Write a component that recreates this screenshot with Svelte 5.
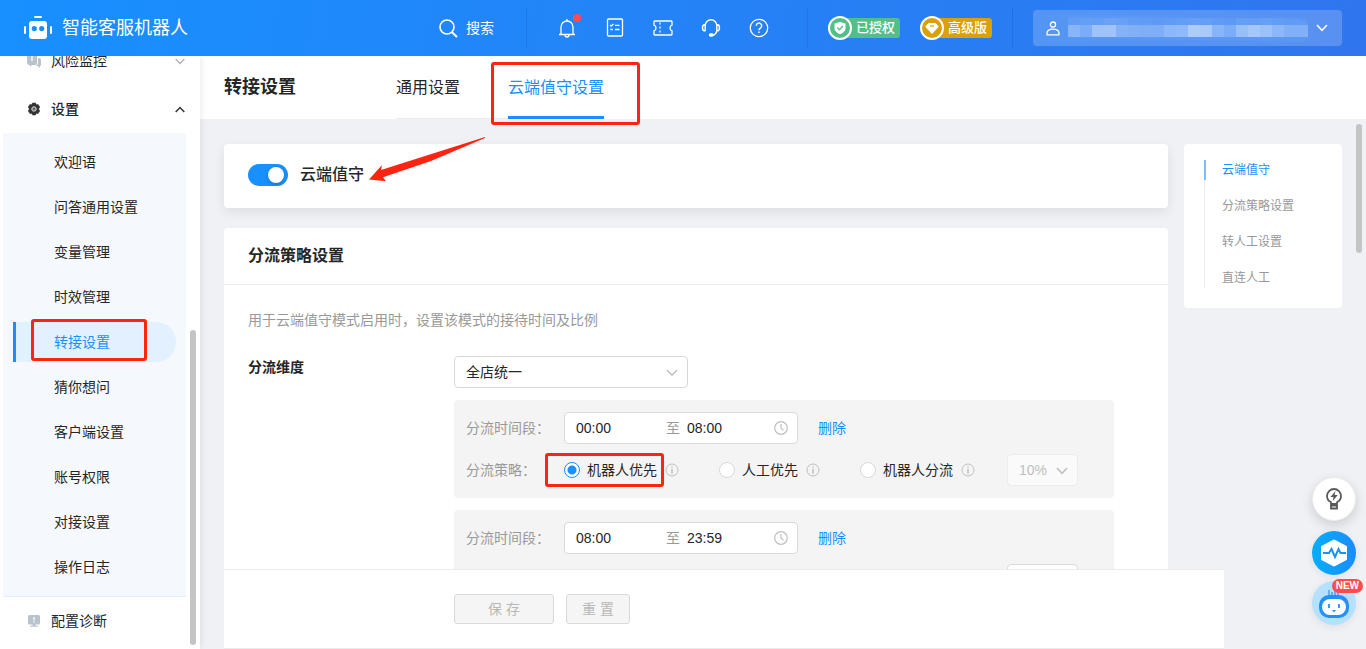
<script>
  const submenu = [
    '欢迎语',
    '问答通用设置',
    '变量管理',
    '时效管理',
    '转接设置',
    '猜你想问',
    '客户端设置',
    '账号权限',
    '对接设置',
    '操作日志'
  ];
  const activeMenu = '转接设置';

  const anchors = ['云端值守', '分流策略设置', '转人工设置', '直连人工'];

  const strategies = ['机器人优先', '人工优先', '机器人分流'];

  let enabled = true;
  let periods = [
    { start: '00:00', end: '08:00', strategy: '机器人优先', disabled: true },
    { start: '08:00', end: '23:59', strategy: '机器人分流', disabled: false }
  ];

  // opacity of each block of the masked account name
  const maskTop = [4, 6, 5, 10, 8, 4, 3, 2, 3, 5, 7, 6, 3, 2, 6, 5, 7, 4, 3, 3];
  const maskMid = [28, 20, 42, 42, 26, 24, 22, 22, 30, 32, 50, 48, 28, 20, 38, 46, 40, 30, 24, 24];

  function removePeriod(index) {
    periods = periods.filter((_, i) => i !== index);
  }
</script>

<div class="app">
  <header class="topbar">
    <a class="brand" href="#home">
      <svg width="28" height="24" viewBox="0 0 28 24" fill="#fff">
        <rect x="10" y="0" width="8" height="2" rx="1" />
        <rect x="0" y="10" width="2" height="8" rx="1" />
        <rect x="26" y="10" width="2" height="8" rx="1" />
        <path fill-rule="evenodd" d="M8 5h12a3 3 0 0 1 3 3v12a3 3 0 0 1-3 3H8a3 3 0 0 1-3-3V8a3 3 0 0 1 3-3zm2.300 5a2.600 2.600 0 1 0 0 5.200 2.600 2.600 0 0 0 0-5.200zm7.400 0a2.600 2.600 0 1 0 0 5.200 2.600 2.600 0 0 0 0-5.200z" />
      </svg>
      <span>智能客服机器人</span>
    </a>

    <button class="search">
      <svg width="19" height="19" viewBox="0 0 19 19" fill="none" stroke="#fff" stroke-width="1.600">
        <circle cx="8" cy="8" r="7" />
        <path d="M13 13.200l5 4.800" stroke-width="2" />
      </svg>
      <span>搜索</span>
    </button>

    <div class="tools">
      <button aria-label="通知">
        <svg width="20" height="20" viewBox="0 0 20 20" fill="none" stroke="#fff" stroke-width="1.300">
          <path d="M10 1v1.500M2 16.500h16M4 16.500V9a6 6 0 0 1 12 0v7.500M8 17a2 2 0 0 0 4 0" />
        </svg>
        <i class="dot"></i>
      </button>
      <button aria-label="任务">
        <svg width="20" height="20" viewBox="0 0 20 20" fill="none" stroke="#fff" stroke-width="1.300">
          <rect x="2.500" y="1" width="15" height="17" rx="1" />
          <path d="M5 7l1.200 1.200L8.400 6M10 7.300h4.500M10 11.500h4.500M5.400 11.500h2.400" />
        </svg>
      </button>
      <button aria-label="卡券">
        <svg width="20" height="20" viewBox="0 0 20 20" fill="none" stroke="#fff" stroke-width="1.300">
          <path d="M1.800 3h16.400q.8 0 .8.800v3.400q-2 .6-2 2.800t2 2.800v3.400q0 .8-.8.800H1.800q-.8 0-.8-.8v-3.400q2-.6 2-2.800T1 7.200V3.800q0-.8.8-.8z" />
          <path d="M7 4.500v11" stroke-dasharray="2 2" />
        </svg>
      </button>
      <button aria-label="客服">
        <svg width="20" height="20" viewBox="0 0 20 20" fill="none" stroke="#fff" stroke-width="1.400">
          <path d="M4.200 13V7.500a5.800 5.800 0 0 1 11.600 0V13c-.6 2.500-2.200 4-4.300 4.300M4.200 6.500C2.200 6.500 1.500 8 1.500 9.800s.7 3.200 2.700 3.200M15.800 6.500c2 0 2.700 1.500 2.700 3.300s-.7 3.200-2.700 3.200" />
          <rect x="8.500" y="16" width="3.500" height="2" rx="1" fill="#fff" />
        </svg>
      </button>
      <button aria-label="帮助">
        <svg width="20" height="20" viewBox="0 0 20 20" fill="none" stroke="#fff" stroke-width="1.300">
          <circle cx="10" cy="10" r="8.700" />
          <path d="M7.300 7.800a2.700 2.700 0 1 1 4.200 2.200c-1 .7-1.500 1-1.500 2.200M10 13.500v1.600" stroke-width="1.500" />
        </svg>
      </button>
    </div>

    <div class="badges">
      <span class="badge green">
        <svg width="24" height="24" viewBox="0 0 24 24">
          <circle cx="12" cy="12" r="11" fill="#53bf88" stroke="#fff" stroke-width="2" />
          <path d="M12 6l5.500 1.500v4.700c0 2.800-2.500 4.800-5.500 6-3-1.200-5.500-3.200-5.500-6V7.500z" fill="#fff" />
          <path d="M9.300 11.500l2.200 2.200 3.400-3.700" fill="none" stroke="#53bf88" stroke-width="1.300" />
        </svg>
        已授权
      </span>
      <span class="badge gold">
        <svg width="24" height="24" viewBox="0 0 24 24">
          <circle cx="12" cy="12" r="11" fill="#dba004" stroke="#fff" stroke-width="2" />
          <path d="M8.500 7.500h7l2.800 3.200L12 17.500l-6.300-6.800z" fill="#fff" stroke="#fff" stroke-linejoin="round" />
          <path d="M10 10h4" stroke="#dba004" stroke-width="1.200" />
        </svg>
        高级版
      </span>
    </div>

    <button class="account" aria-label="账号">
      <svg width="14" height="15" viewBox="0 0 14 15" fill="none" stroke="#fff" stroke-width="1.300">
        <circle cx="7" cy="3.600" r="2.600" />
        <path d="M1 13.800v-1.300c0-2.800 2.500-4.300 6-4.300s6 1.500 6 4.300v1.300z" stroke-linejoin="round" />
      </svg>
      <svg class="mask" width="240" height="28" viewBox="0 0 240 28">
        <path d="M4 2C60-1 80 4 150 4s70 0 84 2q6 1 6 6v12q-2 4-10 4C140 26 70 26 4 24q-4 0-4-6V6q0-4 4-4z" fill="#5b98f5" />
        {#each maskTop as value, i}
          <rect x={i * 12} y="4" width="12" height="7" fill="#fff" fill-opacity={value / 100} />
        {/each}
        {#each maskMid as value, i}
          <rect x={i * 12} y="11" width="12" height="12" fill="#fff" fill-opacity={value / 100} />
        {/each}
      </svg>
      <svg width="12" height="8" viewBox="0 0 12 8" fill="none" stroke="#fff" stroke-width="1.500">
        <path d="M1 1l5 5.300L11 1" />
      </svg>
    </button>
  </header>

  <div class="body">
    <aside class="sidebar">
      <nav>
        <a class="group" href="#risk">
          <svg width="14" height="14" viewBox="0 0 14 14" fill="#b9c2cd">
            <path d="M3 0h5a2 2 0 0 1 2 2v7a2 2 0 0 1-2 2H5l-2 2v-2a2.500 2.500 0 0 1-3-2V2a2 2 0 0 1 3-2z" />
            <path d="M11 4h1a2 2 0 0 1 2 2v4a2 2 0 0 1-1 2v2l-2-2H7.500a3.500 3.500 0 0 0 3.500-3z" />
            <path d="M5 2v5" stroke="#fff" stroke-width="1.300" />
          </svg>
          <span>风险监控</span>
          <svg class="arrow" width="10" height="7" viewBox="0 0 10 7" fill="none" stroke="#b0b0b0" stroke-width="1.300">
            <path d="M.7 1L5 5.500 9.300 1" />
          </svg>
        </a>
        <a class="group open" href="#settings">
          <svg width="14" height="14" viewBox="0 0 14 14">
            <path d="M5.500 1h3l.7 1.700 1.900-.2L12.700 5l-1.100 2 1.100 2-1.600 2.500-1.900-.2L8.500 13h-3l-.7-1.700-1.900.2L1.300 9l1.100-2-1.100-2 1.600-2.500 1.900.2z" fill="#333" stroke="#333" stroke-width=".6" stroke-linejoin="round" />
            <circle cx="7" cy="7" r="2.200" fill="#666" stroke="#ddd" />
          </svg>
          <span>设置</span>
          <svg class="arrow" width="10" height="7" viewBox="0 0 10 7" fill="none" stroke="#333" stroke-width="1.500">
            <path d="M.7 6L5 1.500 9.300 6" />
          </svg>
        </a>
        <ul class="submenu">
          {#each submenu as item}
            <li>
              <a href="#menu" class:active={item === activeMenu}>
                {item}
                {#if item === activeMenu}<i class="mark menu-mark"></i>{/if}
              </a>
            </li>
          {/each}
        </ul>
        <a class="group" href="#diagnose">
          <svg width="14" height="14" viewBox="0 0 14 14" fill="#b9c2cd">
            <rect x="1" y="1" width="12" height="9.500" rx="1.500" />
            <path d="M5.500 10h3v2h-3zM3 11.700h8v1H3z" />
            <path d="M7 3v3.500M7 7.500v1.200" stroke="#fff" stroke-width="1.300" />
          </svg>
          <span>配置诊断</span>
        </a>
      </nav>
      <i class="thumb side-thumb"></i>
    </aside>

    <main>
      <div class="page-head">
        <h1>转接设置</h1>
        <div class="tabs">
          <a href="#common">通用设置</a>
          <a href="#cloud" class="active">云端值守设置<i class="mark tab-mark"></i></a>
        </div>
      </div>

      <div class="content">
        <div class="cards">
          <section class="card switch-card">
            <label>
              <input class="switch" type="checkbox" role="switch" bind:checked={enabled} />
              <span>云端值守</span>
              <svg class="pointer" width="116" height="46" viewBox="0 0 116 46">
                <path d="M116 1L12 34l1-5L0 43.500l17 1.700-3-4L62 25 116 2z" fill="#ff2412" />
              </svg>
            </label>
          </section>

          <section class="card">
            <h2>分流策略设置</h2>
            <div class="card-body">
              <p>用于云端值守模式启用时，设置该模式的接待时间及比例</p>
              <div class="form-row">
                <label class="form-label" for="dimension">分流维度</label>
                <div class="form-control">
                  <div class="select wide">
                    <select id="dimension">
                      <option>全店统一</option>
                    </select>
                    <svg width="12" height="8" viewBox="0 0 12 8" fill="none" stroke="#bfbfbf" stroke-width="1.300">
                      <path d="M1 1l5 5.300L11 1" />
                    </svg>
                  </div>

                  {#each periods as period, index}
                    <div class="panel">
                      <div class="panel-row">
                        <label class="panel-label" for="start-{index}">分流时间段：</label>
                        <div class="range">
                          <input id="start-{index}" type="text" aria-label="开始时间" bind:value={period.start} />
                          <span>至</span>
                          <input type="text" aria-label="结束时间" bind:value={period.end} />
                          <svg width="14" height="14" viewBox="0 0 14 14" fill="none" stroke="#bfbfbf" stroke-width="1.200">
                            <circle cx="7" cy="7" r="6.300" />
                            <path d="M7 3v4.300l2.500 2" />
                          </svg>
                        </div>
                        <button class="remove" on:click={() => removePeriod(index)}>删除</button>
                      </div>
                      <div class="panel-row">
                        <span class="panel-label">分流策略：</span>
                        <div class="radios">
                          {#each strategies as strategy, i}
                            <div class="radio">
                              <label>
                                <input type="radio" name="strategy-{index}" value={strategy} bind:group={period.strategy} />
                                {strategy}
                                {#if index === 0 && i === 0}<i class="mark radio-mark"></i>{/if}
                              </label>
                              <svg width="14" height="14" viewBox="0 0 14 14" fill="none" stroke="#bfbfbf">
                                <circle cx="7" cy="7" r="6" />
                                <path d="M7 3.200v1.400M7 5.800v5" stroke-width="1.400" />
                              </svg>
                            </div>
                          {/each}
                        </div>
                        <div class="select small" class:disabled={period.disabled}>
                          <select aria-label="分流比例" disabled={period.disabled}>
                            <option>10%</option>
                          </select>
                          <svg width="12" height="8" viewBox="0 0 12 8" fill="none" stroke="#bfbfbf" stroke-width="1.600">
                            <path d="M1 1l5 5.300L11 1" />
                          </svg>
                        </div>
                      </div>
                    </div>
                  {/each}
                </div>
              </div>
            </div>
          </section>
        </div>

        <nav class="anchor">
          <ul>
            {#each anchors as item, i}
              <li class:active={i === 0}><a href="#anchor">{item}</a></li>
            {/each}
          </ul>
        </nav>
        <i class="thumb main-thumb"></i>
      </div>

      <footer>
        <button class="save" disabled>保 存</button>
        <button class="reset" disabled>重 置</button>
      </footer>
    </main>
  </div>

  <div class="floats">
    <button class="tip" aria-label="提示">
      <svg width="16" height="22" viewBox="0 0 16 22" fill="none" stroke="#595959" stroke-width="1.800">
        <path d="M5 16v-1.700C2.500 13 1 10.800 1 8a7 7 0 0 1 14 0c0 2.800-1.500 5-4 6.300V16zM5 16v4.500h6V16M5 17.500h6" />
        <path d="M9.500 3L4.500 9h3L6.800 13l5-6H8.600z" fill="#595959" stroke="none" />
      </svg>
    </button>
    <button class="pulse" aria-label="诊断">
      <svg width="28" height="28" viewBox="0 0 28 28">
        <path d="M14 2l11.500 6v12L14 26 2.500 20V8z" fill="#fff" stroke="#fff" stroke-width="3" stroke-linejoin="round" />
        <path d="M3 14h6l2.500-4 3.500 8 3.500-8 2 4H26" fill="none" stroke="#1b93f5" stroke-width="2" />
      </svg>
    </button>
    <button class="bot" aria-label="机器人">
      <svg width="32" height="32" viewBox="0 0 32 32">
        <path d="M11 3v5M14 5v3M17 1v7M20 4v4" stroke="#2b8ff0" stroke-width="1.200" />
        <rect x="1" y="8" width="30" height="23" rx="10" fill="#2490fb" />
        <rect x="4" y="12" width="24" height="16" rx="8" fill="#fff" />
        <path d="M11 17v4M21 17v4" stroke="#2490fb" stroke-width="1.800" />
        <path d="M14 23h4l-2 2.500z" fill="#2490fb" />
      </svg>
      <span class="new">NEW</span>
    </button>
  </div>
</div>

<style>
  :global(body) {
    margin: 0;
    font-family: 'Liberation Sans', 'Noto Sans CJK SC', sans-serif;
    font-size: 14px;
    line-height: 22px;
    color: #262626;
  }

  .app,
  .app * {
    box-sizing: border-box;
  }

  .app {
    position: relative;
    display: flex;
    flex-direction: column;
    height: 100vh;
    overflow: hidden;
    background: #f0f1f5;
  }

  a {
    color: inherit;
    text-decoration: none;
  }

  button,
  input,
  select {
    font: inherit;
    color: inherit;
    margin: 0;
  }

  button {
    padding: 0;
    border: 0;
    background: none;
    cursor: pointer;
  }

  ul,
  h1,
  h2,
  p {
    list-style: none;
    margin: 0;
    padding: 0;
  }

  svg {
    display: block;
    flex: none;
  }

  .topbar {
    display: flex;
    align-items: center;
    flex: none;
    height: 56px;
    padding: 0 24px;
    color: #fff;
    background: linear-gradient(100deg, #1890ff, #3075ee);
    z-index: 5;
  }

  .brand {
    display: flex;
    align-items: center;
    gap: 10px;
    margin-right: auto;
    font-size: 18px;
  }

  .search {
    display: flex;
    align-items: center;
    gap: 8px;
    margin-right: 32px;
  }

  .tools,
  .badges {
    display: flex;
    align-items: center;
    height: 40px;
    border-left: 1px solid rgba(0, 40, 120, 0.12);
  }

  .tools {
    gap: 28px;
    padding: 0 38px 0 30px;
  }

  .tools button {
    position: relative;
  }

  .dot {
    position: absolute;
    top: -4px;
    right: -4px;
    width: 8px;
    height: 8px;
    border-radius: 50%;
    background: #ff4d4f;
  }

  .badges {
    gap: 20px;
    padding: 0 20px;
    border-right: 1px solid rgba(0, 40, 120, 0.12);
  }

  .badge {
    display: flex;
    align-items: center;
    gap: 4px;
    width: 72px;
    height: 20px;
    border-radius: 12px 4px 4px 12px;
    font-size: 13px;
    font-weight: 500;
    white-space: nowrap;
  }

  .green {
    background: #53bf88;
  }

  .gold {
    background: #dba004;
  }

  .account {
    display: flex;
    align-items: center;
    justify-content: space-between;
    width: 309px;
    height: 36px;
    margin-left: 20px;
    padding: 0 14px 0 13px;
    border-radius: 4px;
    background: rgba(255, 255, 255, 0.2);
  }

  .body {
    display: flex;
    flex: 1;
    min-height: 0;
  }

  .sidebar {
    position: relative;
    flex: none;
    width: 200px;
    overflow: hidden;
    background: #fff;
    box-shadow: 0 0 8px rgba(0, 0, 0, 0.1);
    z-index: 2;
  }

  .sidebar nav {
    margin: -19px 14px 0 3px;
  }

  .group {
    display: flex;
    align-items: center;
    gap: 10px;
    height: 48px;
    padding: 0 1px 0 24px;
  }

  .open {
    font-weight: 500;
  }

  .arrow {
    margin-left: auto;
  }

  .submenu {
    display: flex;
    flex-direction: column;
    gap: 5px;
    padding: 9px 10px;
    border-bottom: 1px solid #e3effa;
    background: #f5f9fd;
  }

  .submenu a {
    display: block;
    position: relative;
    padding-left: 38px;
    border-left: 3px solid transparent;
    border-radius: 0 20px 20px 0;
    line-height: 40px;
  }

  .submenu .active {
    border-left-color: #1890ff;
    background: #e2f0ff;
    color: #1890ff;
  }

  /* red highlight frames */
  .mark {
    position: absolute;
    border: 3px solid #ff2412;
    border-radius: 3px;
    pointer-events: none;
  }

  .menu-mark {
    top: -3px;
    left: 15px;
    width: 116px;
    height: 42px;
  }

  .tab-mark {
    top: 6px;
    left: -17px;
    width: 149px;
    height: 63px;
  }

  .radio-mark {
    top: -6px;
    left: -19px;
    width: 119px;
    height: 34px;
  }

  .thumb {
    position: absolute;
    width: 6px;
    border-radius: 3px;
    background: #c4c4c4;
  }

  .side-thumb {
    right: 4px;
    bottom: 4px;
    height: 315px;
  }

  .main-thumb {
    top: 5px;
    right: 4px;
    height: 129px;
  }

  main {
    display: flex;
    flex-direction: column;
    flex: 1;
    min-width: 0;
  }

  .page-head {
    display: flex;
    flex: none;
    height: 63px;
    padding-left: 24px;
    background: #fff;
    z-index: 1;
  }

  h1 {
    width: 172px;
    font-size: 18px;
    font-weight: 700;
    line-height: 63px;
  }

  .tabs {
    display: flex;
    gap: 48px;
    font-size: 16px;
    line-height: 64px;
    border-bottom: 1px solid #ebebeb;
  }

  .tabs a {
    position: relative;
    height: 63px;
  }

  .tabs .active {
    color: #1890ff;
    border-bottom: 3px solid #1890ff;
  }

  .content {
    position: relative;
    display: flex;
    align-items: flex-start;
    gap: 16px;
    flex: 1;
    min-height: 0;
    padding: 25px 24px 0;
    overflow: hidden;
  }

  .cards {
    display: flex;
    flex-direction: column;
    gap: 20px;
    flex: 1;
    min-width: 0;
  }

  .card {
    border-radius: 4px;
    background: #fff;
  }

  .switch-card {
    padding: 20px 24px 22px;
    box-shadow: 0 4px 12px rgba(0, 0, 0, 0.08);
  }

  .switch-card label {
    position: relative;
    display: flex;
    align-items: center;
    gap: 12px;
    width: fit-content;
    font-size: 16px;
    font-weight: 500;
  }

  .pointer {
    position: absolute;
    top: -28px;
    left: 121px;
  }

  .switch {
    appearance: none;
    display: flex;
    align-items: center;
    width: 40px;
    height: 22px;
    padding: 0 4px;
    border-radius: 11px;
    background: #bfbfbf;
  }

  .switch::before {
    content: '';
    width: 16px;
    height: 16px;
    border-radius: 50%;
    background: #fff;
    box-shadow: 0 2px 4px rgba(0, 35, 11, 0.2);
  }

  .switch:checked {
    justify-content: flex-end;
    background: #1890ff;
  }

  h2 {
    padding: 0 24px;
    border-bottom: 1px solid #ebebeb;
    font-size: 16px;
    font-weight: 600;
    line-height: 56px;
  }

  .card-body {
    padding: 24px;
  }

  .card-body p {
    margin-bottom: 25px;
    color: #999;
  }

  .form-row {
    display: flex;
  }

  .form-label {
    flex: none;
    width: 206px;
    font-weight: 600;
  }

  .form-control {
    display: flex;
    flex-direction: column;
    gap: 12px;
    flex: 1;
    max-width: 660px;
  }

  .select {
    position: relative;
  }

  .select select {
    appearance: none;
    width: 100%;
    height: 32px;
    padding: 0 11px;
    border: 1px solid #d9d9d9;
    border-radius: 4px;
    background: #fff;
  }

  .select svg {
    position: absolute;
    top: 13px;
    right: 10px;
    pointer-events: none;
  }

  .wide {
    width: 234px;
  }

  .small {
    width: 71px;
    margin-left: 32px;
  }

  .disabled select {
    border-color: #ececec;
    background: #fafafa;
    color: #bfbfbf;
    opacity: 1;
  }

  .panel {
    display: flex;
    flex-direction: column;
    gap: 10px;
    padding: 12px;
    border-radius: 4px;
    background: #f4f4f4;
  }

  .panel-row {
    display: flex;
    align-items: center;
    height: 32px;
  }

  .panel-label {
    flex: none;
    width: 98px;
    color: #999;
  }

  .range {
    display: flex;
    align-items: center;
    width: 234px;
    height: 32px;
    padding: 0 9px 0 11px;
    border: 1px solid #d9d9d9;
    border-radius: 4px;
    background: #fff;
    color: #999;
  }

  .range input {
    width: 90px;
    padding: 0;
    border: 0;
    outline: 0;
    background: none;
    color: #262626;
  }

  .range input:last-of-type {
    flex: 1;
    min-width: 0;
    margin-left: 7px;
  }

  .remove {
    margin-left: 20px;
    color: #1890ff;
  }

  .radios {
    display: flex;
    gap: 40px;
  }

  .radio {
    display: flex;
    align-items: center;
    gap: 8px;
  }

  .radio label {
    position: relative;
    display: flex;
    align-items: center;
    gap: 7px;
    white-space: nowrap;
  }

  .radio input {
    appearance: none;
    width: 16px;
    height: 16px;
    border: 1px solid #d9d9d9;
    border-radius: 50%;
    background: #fff;
  }

  .radio input:checked {
    border-color: #1890ff;
    background: radial-gradient(#1890ff 4px, #fff 5px);
  }

  .anchor {
    flex: none;
    width: 158px;
    padding: 16px 20px 20px;
    border-radius: 4px;
    background: #fff;
    font-size: 12px;
    line-height: 20px;
    color: #999;
  }

  .anchor ul {
    display: flex;
    flex-direction: column;
    gap: 16px;
    border-left: 1px solid #ebebeb;
  }

  .anchor li {
    padding-left: 17px;
  }

  .anchor .active {
    margin-left: -1px;
    border-left: 2px solid #7dbdfb;
    padding-left: 16px;
    color: #1890ff;
  }

  footer {
    display: flex;
    flex: none;
    gap: 12px;
    margin: 0 142px 0 24px;
    padding: 24px 0 24px 230px;
    border: 1px solid #ebebeb;
    border-width: 1px 0;
    background: #fff;
  }

  footer button {
    height: 30px;
    border: 1px solid #d9d9d9;
    border-radius: 3px;
    background: #f5f5f5;
    color: #b8b8b8;
  }

  .save {
    width: 100px;
  }

  .reset {
    width: 64px;
  }

  .floats {
    position: absolute;
    right: 10px;
    bottom: 24px;
    display: flex;
    flex-direction: column;
    gap: 6px;
    z-index: 6;
  }

  .floats button {
    position: relative;
    display: flex;
    align-items: center;
    justify-content: center;
    width: 44px;
    height: 44px;
    border-radius: 50%;
    box-shadow: 0 2px 8px rgba(0, 0, 0, 0.08);
  }

  .floats .tip {
    margin-bottom: 4px;
    border: 1px solid #ececec;
    background: #fff;
    box-shadow: 0 4px 12px rgba(0, 0, 0, 0.15);
  }

  .pulse {
    background: linear-gradient(90deg, #06aef8, #1a8cff);
  }

  .bot {
    background: #b5e1ff;
  }

  .new {
    position: absolute;
    top: -2px;
    right: -7px;
    padding: 0 4px;
    border-radius: 7px;
    background: #ff4d4f;
    color: #fff;
    font-size: 10px;
    font-weight: 700;
    line-height: 14px;
  }
</style>
